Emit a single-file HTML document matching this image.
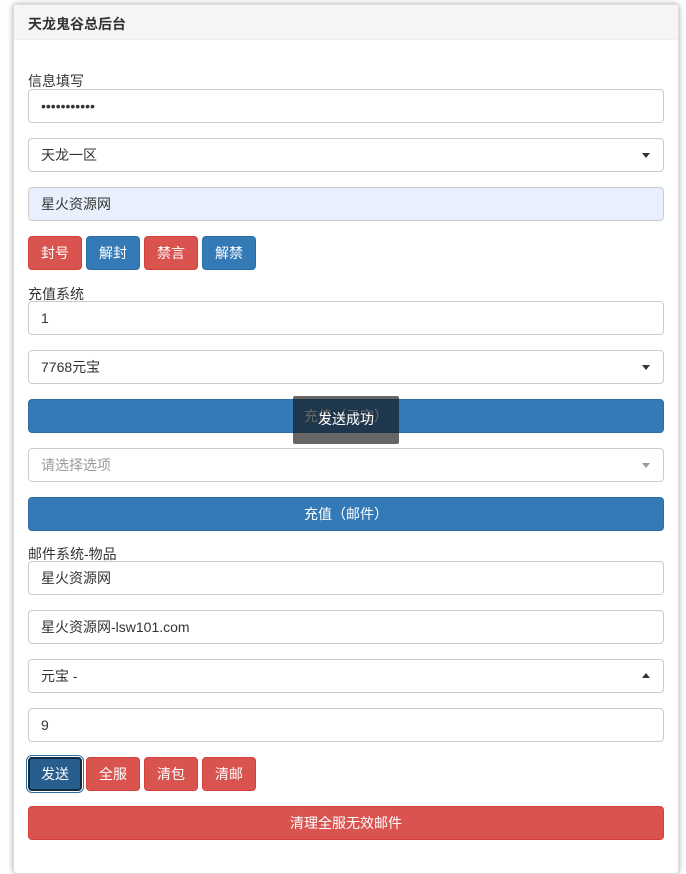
<!DOCTYPE html>
<html><head><meta charset="utf-8"><style>
*{box-sizing:border-box;margin:0;padding:0}
body{width:686px;height:854px;background:#fff;font-family:"Liberation Sans","Noto Sans CJK SC",sans-serif;font-size:14px;color:#333;overflow:hidden;position:relative}
.panel{position:absolute;left:13px;top:4px;width:666px;height:870px;border:1px solid #ddd;border-radius:4px;box-shadow:0 0 6px rgba(0,0,0,.35);background:#fff}
.hd{height:35px;background:#f5f5f5;border-bottom:1px solid #eee;padding:9px 14px;font-weight:bold;font-size:14px;color:#333}
.a{position:absolute;left:28px;width:636px;height:34px}
.in{border:1px solid #ccc;border-radius:4px;padding:0 12px;line-height:32px;background:#fff}
.lbl{position:absolute;left:28px;font-size:14px}
.caret{position:absolute;right:13px;top:14px;width:0;height:0;border-left:4px solid transparent;border-right:4px solid transparent;border-top:5px solid #333}
.up{border-top:none;border-bottom:5px solid #333;top:13px}
.btn{position:absolute;height:34px;border-radius:4px;color:#fff;text-align:center;line-height:32px;font-size:14px;border:1px solid}
.r{background:#d9534f;border-color:#d43f3a}
.b{background:#337ab7;border-color:#2e6da4}
</style></head><body>
<div class="panel"><div class="hd">天龙鬼谷总后台</div></div>
<div class="lbl" style="top:71px">信息填写</div>
<div class="a in" style="top:89px">•••••••••••</div>
<div class="a in" style="top:138px">天龙一区<span class="caret"></span></div>
<div class="a in" style="top:187px;background:#e8f0fe">星火资源网</div>
<div class="btn r" style="left:28px;top:236px;width:54px">封号</div>
<div class="btn b" style="left:86px;top:236px;width:54px">解封</div>
<div class="btn r" style="left:144px;top:236px;width:54px">禁言</div>
<div class="btn b" style="left:202px;top:236px;width:54px">解禁</div>
<div class="lbl" style="top:284px">充值系统</div>
<div class="a in" style="top:301px">1</div>
<div class="a in" style="top:350px">7768元宝<span class="caret"></span></div>
<div class="btn b a" style="top:399px">充值（元宝）</div>
<div class="a in" style="top:448px;color:#999">请选择选项<span class="caret" style="border-top-color:#999"></span></div>
<div class="btn b a" style="top:497px">充值（邮件）</div>
<div class="lbl" style="top:544px">邮件系统-物品</div>
<div class="a in" style="top:561px">星火资源网</div>
<div class="a in" style="top:610px">星火资源网-lsw101.com</div>
<div class="a in" style="top:659px">元宝 -<span class="caret up"></span></div>
<div class="a in" style="top:708px">9</div>
<div class="btn b" style="left:28px;top:757px;width:54px;background:#285e8e;border:2px solid #122b40;box-shadow:0 0 0 1px #fff,0 0 0 2px #2e6da4;line-height:30px">发送</div>
<div class="btn r" style="left:86px;top:757px;width:54px">全服</div>
<div class="btn r" style="left:144px;top:757px;width:54px">清包</div>
<div class="btn r" style="left:202px;top:757px;width:54px">清邮</div>
<div class="btn r a" style="top:806px">清理全服无效邮件</div>
<div style="position:absolute;left:293px;top:396px;width:106px;height:48px;background:rgba(20,20,20,.65);border-radius:2px;color:#fff;text-align:center;line-height:46px;font-size:14px">发送成功</div>
</body></html>
